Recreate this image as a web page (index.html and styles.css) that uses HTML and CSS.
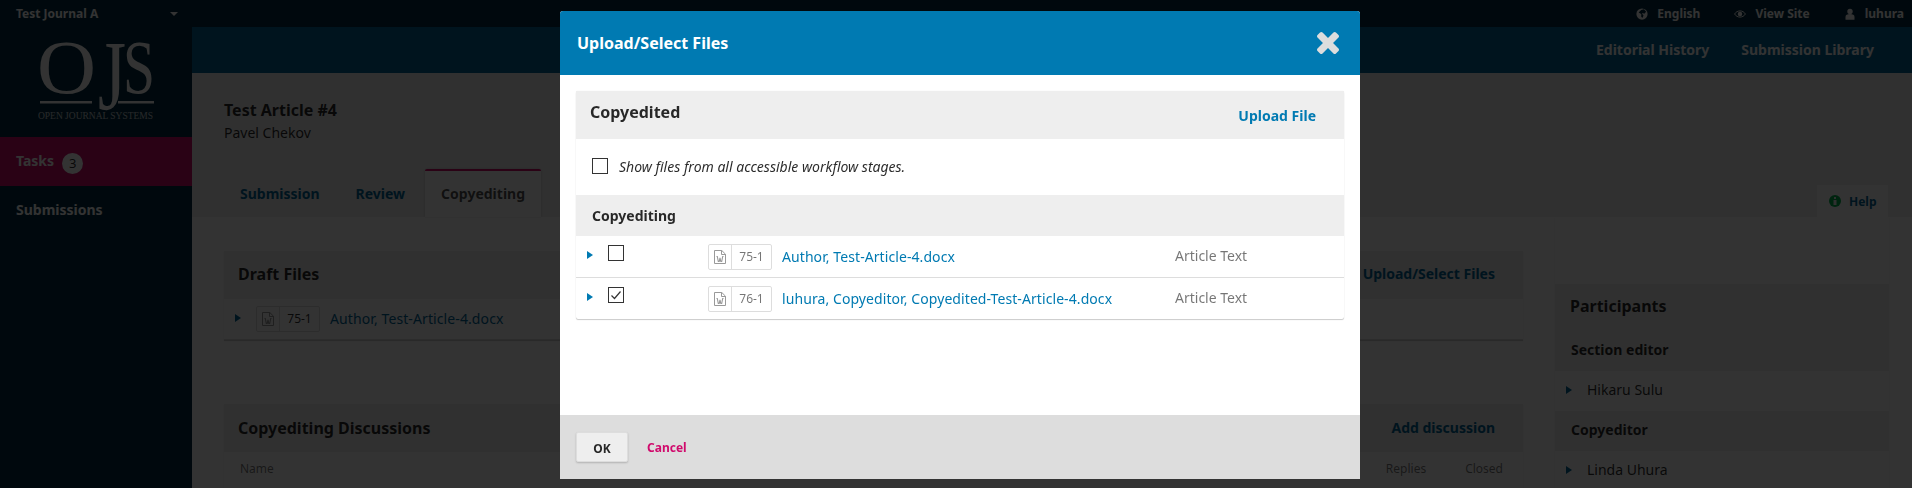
FILE: index.html
```html
<!DOCTYPE html>
<html lang="en">
<head>
<meta charset="utf-8">
<title>Upload/Select Files</title>
<link rel="stylesheet" href="styles.css">
</head>
<body>
<svg class="defs" width="0" height="0" aria-hidden="true">
  <symbol id="i-word" viewBox="0 0 12 14">
    <path d="M.5.5h7.300l3.700 3.700v9.300H.5z" fill="#fff" stroke="currentColor"/>
    <path d="M7.500.5v4h4" fill="none" stroke="currentColor"/>
    <path d="M2.500 6.500h.8l1 5h.9l.8-3.600.8 3.600h.9l1-5h.8" fill="none" stroke="currentColor" stroke-width="1.100"/>
  </symbol>
  <symbol id="i-caret" viewBox="0 0 6 8"><path d="M0 0l6 4-6 4z" fill="currentColor"/></symbol>
</svg>

<div class="page">
  <header class="topbar">
    <div class="journal"><span>Test Journal A</span><i class="caret-down"></i></div>
    <nav class="usernav">
      <a class="usernav-item">
        <svg class="uicon" viewBox="0 0 16 16"><circle cx="8" cy="8" r="7.500" fill="currentColor"/><path d="M7 2.500l3.500-1 3 3.500-2.500 2.500-2-1-1 1 2 2-1 3.500-2-1V8L3.500 6z" fill="#002c40"/></svg>
        English</a>
      <a class="usernav-item">
        <svg class="uicon" viewBox="0 0 16 16"><path d="M.8 8c3.200-5.500 11.200-5.500 14.400 0-3.200 5.500-11.200 5.500-14.400 0z" fill="none" stroke="currentColor" stroke-width="1.300"/><circle cx="8" cy="8" r="3" fill="currentColor"/></svg>
        View Site</a>
      <a class="usernav-item">
        <svg class="uicon" viewBox="0 0 16 16"><circle cx="8" cy="4.500" r="3.600" fill="currentColor"/><path d="M2 15.500v-3.500c0-3 2.200-4 6-4s6 1 6 4v3.500z" fill="currentColor"/></svg>
        luhura</a>
    </nav>
  </header>

  <div class="shell">
    <aside class="sidebar">
      <svg class="logo" viewBox="0 0 116 76" role="img" aria-label="OJS">
        <text class="logo-letter" x="-1" y="49.500" font-size="76" textLength="59" lengthAdjust="spacingAndGlyphs">O</text>
        <text class="logo-letter" x="60" y="66" font-size="100" textLength="28" lengthAdjust="spacingAndGlyphs">J</text>
        <text class="logo-letter" x="85" y="49.500" font-size="76" textLength="32" lengthAdjust="spacingAndGlyphs">S</text>
        <rect x="2" y="58" width="52" height="2.500"/>
        <rect x="80" y="58" width="36" height="2.500"/>
        <text class="logo-small" x="0" y="75.500" font-size="10" textLength="115" lengthAdjust="spacingAndGlyphs">OPEN JOURNAL SYSTEMS</text>
      </svg>
      <a class="side-item side-active">Tasks <span class="badge">3</span></a>
      <a class="side-item">Submissions</a>
    </aside>

    <main class="main">
      <div class="appbar">
        <a>Editorial History</a>
        <a>Submission Library</a>
      </div>
      <section class="head">
        <h1>Test Article #4</h1>
        <p>Pavel Chekov</p>
        <div class="tabs">
          <a class="tab">Submission</a>
          <a class="tab">Review</a>
          <a class="tab tab-current">Copyediting</a>
          <a class="help">
            <svg class="help-icon" viewBox="0 0 12 12"><circle cx="6" cy="6" r="6" fill="#00b24e"/><rect x="5" y="2" width="2" height="2" fill="#eee"/><rect x="4.500" y="5" width="3" height="5" fill="#eee"/></svg>
            <span>Help</span></a>
        </div>
      </section>
      <section class="content">
        <div class="col-left">
          <div class="bg-panel">
            <div class="bg-head"><h2>Draft Files</h2><a>Upload/Select Files</a></div>
            <div class="bg-row">
              <svg class="tri"><use href="#i-caret"/></svg>
              <span class="filetag filetag-dim"><span class="filetag-icon"><svg class="word"><use href="#i-word"/></svg></span><span class="filetag-num">75-1</span></span>
              <a class="link">Author, Test-Article-4.docx</a>
            </div>
          </div>
          <div class="bg-panel bg-panel-next">
            <div class="bg-head"><h2>Copyediting Discussions</h2><a>Add discussion</a></div>
            <div class="bg-cols"><span class="col-name">Name</span><span class="col-replies">Replies</span><span class="col-closed">Closed</span></div>
          </div>
        </div>
        <div class="col-right">
          <div class="part-head">
            <h2>Participants</h2>
            <h3>Section editor</h3>
          </div>
          <div class="part-row"><svg class="tri"><use href="#i-caret"/></svg>Hikaru Sulu</div>
          <h3 class="part-sub">Copyeditor</h3>
          <div class="part-row"><svg class="tri"><use href="#i-caret"/></svg>Linda Uhura</div>
        </div>
      </section>
    </main>
  </div>
</div>

<div class="overlay"></div>

<div class="modal" role="dialog">
  <div class="modal-head">
    <h2>Upload/Select Files</h2>
    <svg class="close" viewBox="110 366 1188 1188"><path d="M1298 1322q0 40-28 68l-136 136q-28 28-68 28t-68-28l-294-294-294 294q-28 28-68 28t-68-28l-136-136q-28-28-28-68t28-68l294-294-294-294q-28-28-28-68t28-68l136-136q28-28 68-28t68 28l294 294 294-294q28-28 68-28t68 28l136 136q28 28 28 68t-28 68l-294 294 294 294q28 28 28 68z" fill="#ddd"/></svg>
  </div>
  <div class="modal-body">
    <div class="panel">
      <div class="panel-head">
        <h3>Copyedited</h3>
        <a class="upload">Upload File</a>
      </div>
      <label class="show-all"><span class="check"></span><em>Show files from all accessible workflow stages.</em></label>
      <div class="stage">Copyediting</div>
      <div class="file-row">
        <svg class="tri tri-blue"><use href="#i-caret"/></svg>
        <span class="check check-row"></span>
        <span class="filetag"><span class="filetag-icon"><svg class="word"><use href="#i-word"/></svg></span><span class="filetag-num">75-1</span></span>
        <a class="file-name">Author, Test-Article-4.docx</a>
        <span class="file-type">Article Text</span>
      </div>
      <div class="file-row">
        <svg class="tri tri-blue"><use href="#i-caret"/></svg>
        <span class="check check-row"><svg viewBox="0 0 14 14"><path d="M2.500 7.500l3 3 6-7" fill="none" stroke="#333" stroke-width="1.200"/></svg></span>
        <span class="filetag"><span class="filetag-icon"><svg class="word"><use href="#i-word"/></svg></span><span class="filetag-num">76-1</span></span>
        <a class="file-name">luhura, Copyeditor, Copyedited-Test-Article-4.docx</a>
        <span class="file-type">Article Text</span>
      </div>
    </div>
  </div>
  <div class="modal-foot">
    <button class="ok">OK</button>
    <a class="cancel">Cancel</a>
  </div>
</div>
</body>
</html>
```
FILE: styles.css
```css
* { box-sizing: border-box; }
html, body { margin: 0; height: 488px; overflow: hidden; }
body { font-family: "Noto Sans", sans-serif; font-size: 14px; line-height: 20px; color: rgba(0,0,0,.84); background: #fff; }
h1, h2, h3, p { margin: 0; }
.defs { position: absolute; }
a { color: #006798; }

.page { height: 488px; overflow: hidden; }
.topbar { height: 27px; background: #002c40; display: flex; justify-content: space-between; align-items: center; color: #fff; font-size: 12px; font-weight: 700; }
.journal { width: 178px; padding-left: 16px; display: flex; justify-content: space-between; align-items: center; }
.caret-down { width: 0; height: 0; border: 4.500px solid transparent; border-top-color: #fff; border-bottom: 0; }
.usernav { display: flex; gap: 34px; padding-right: 8px; }
.usernav-item { color: #fff; display: flex; align-items: center; gap: 9px; }
.uicon { width: 12px; height: 12px; }

.shell { display: flex; height: 461px; }
.sidebar { width: 192px; background: #002c40; flex: none; display: flex; flex-direction: column; }
.logo { width: 116px; height: 76px; margin: 16px 0 18px 38px; fill: #fff; overflow: visible; }
.logo-letter { font-family: "Liberation Serif", serif; }
.logo-small { font-family: "Liberation Serif", serif; opacity: .75; }
.side-item { height: 49px; padding: 0 0 2px 16px; display: flex; align-items: center; gap: 8px; color: #fff; font-weight: 700; font-size: 14px; }
.side-active { background: #d00a6c; }
.badge { width: 21px; height: 21px; border-radius: 50%; background: #fff; color: rgba(0,0,0,.84); font-weight: 400; font-size: 13px; display: flex; align-items: center; justify-content: center; margin-top: 5px; }

.main { flex: 1; min-width: 0; }
.appbar { height: 46px; background: #006798; display: flex; justify-content: flex-end; align-items: center; gap: 32px; padding-right: 38px; }
.appbar a { color: #fff; font-weight: 700; font-size: 14px; }

.head { height: 144px; background: #eee; padding: 27px 0 0 32px; display: flex; flex-direction: column; }
.head h1 { font-size: 16px; font-weight: 700; line-height: 20px; }
.head p { font-size: 14px; margin-top: 3px; }
.tabs { margin-top: auto; display: flex; gap: 4px; align-items: flex-end; height: 48px; padding-right: 24px; }
.tab { height: 46px; display: flex; align-items: center; padding: 0 16px; font-weight: 700; font-size: 14px; }
.tab-current { height: 48px; background: #fff; border-top: 2px solid #d00a6c; border-radius: 2px 2px 0 0; box-shadow: 0 0 2px rgba(0,0,0,.2); color: rgba(0,0,0,.7); }
.help { margin-left: auto; height: 32px; width: 71px; padding-left: 12px; background: #fff; display: flex; align-items: center; gap: 8px; font-size: 12px; font-weight: 700; }
.help span { margin-top: 2px; }
.help-icon { width: 12px; height: 12px; }

.content { background: #fff; display: flex; gap: 32px; padding: 0 23px 0 32px; height: 271px; }
.col-left { width: 1299px; padding-top: 34px; }
.col-right { width: 334px; padding-top: 67px; box-shadow: 0 1px 1px rgba(0,0,0,.1); }
.bg-panel { box-shadow: 0 1px 1px rgba(0,0,0,.2); }
.bg-panel-next { margin-top: 64px; }
.bg-head { height: 48px; padding: 0 28px 2px 14px; display: flex; justify-content: space-between; align-items: center; background: #eee; }
.bg-panel-next .bg-head { padding-bottom: 0; }
.bg-head h2 { font-size: 16px; font-weight: 700; }
.bg-head a { font-weight: 700; font-size: 14px; }
.bg-row { height: 41px; padding-left: 11px; display: flex; align-items: center; border-bottom: 1px solid #ddd; }
.bg-row .tri { margin: -3px 15px 0 0; }
.bg-row .filetag { margin-right: 10px; }
.link { font-size: 14px; letter-spacing: .1px; }
.bg-cols { height: 36px; padding-bottom: 2px; display: flex; align-items: center; font-size: 12px; color: rgba(0,0,0,.54); padding-left: 16px; }
.col-name { flex: 1; }
.col-replies { margin-right: 39px; }
.col-closed { margin-right: 20px; }

.part-head { height: 87px; background: #eee; padding: 12px 0 0 15px; }
.part-head h2 { font-size: 16px; font-weight: 700; }
.part-head h3, .part-sub { font-size: 14px; font-weight: 700; }
.part-head h3 { margin: 24px 0 0 1px; }
.part-sub { height: 40px; background: #eee; display: flex; align-items: center; padding: 0 0 2px 16px; }
.part-row { height: 40px; display: flex; align-items: center; padding: 0 0 2px 11px; font-size: 14px; }
.part-row .tri { margin-right: 15px; }

.tri { width: 6px; height: 8px; color: #006798; flex: none; }
.filetag { width: 64px; height: 26px; border: 1px solid #ddd; border-radius: 2px; display: inline-flex; font-size: 12px; color: rgba(0,0,0,.54); background: #fff; flex: none; }
.filetag-dim { color: rgba(0,0,0,.84); }
.filetag-icon { width: 23px; border-right: 1px solid #ddd; display: flex; align-items: center; justify-content: center; color: #999; }
.filetag-num { flex: 1; text-align: center; line-height: 24px; }
.word { width: 12px; height: 14px; }

.overlay { position: fixed; inset: 0; background: rgba(0,0,0,.8); }
.modal { position: absolute; left: 560px; top: 11px; width: 800px; height: 468px; background: #fff; border-radius: 3px 3px 0 0; display: flex; flex-direction: column; overflow: hidden; }
.modal-head { height: 64px; background: #007ab2; display: flex; align-items: center; justify-content: space-between; padding: 0 21px 0 17px; flex: none; }
.modal-head h2 { color: #fff; font-size: 16px; font-weight: 700; }
.close { width: 22px; height: 22px; }
.modal-body { flex: 1; padding: 16px 16px 0; }
.panel { box-shadow: 0 1px 1px rgba(0,0,0,.2), 0 0 1px rgba(0,0,0,.15); border-radius: 2px; }
.panel-head { height: 48px; background: #eee; display: flex; justify-content: space-between; padding: 0 28px 0 14px; }
.panel-head h3 { font-size: 16px; font-weight: 700; line-height: 20px; margin-top: 11px; }
.upload { color: #007ab2; font-size: 14px; font-weight: 700; margin-top: 15px; }
.show-all { height: 56px; display: flex; align-items: center; padding-left: 16px; gap: 11px; }
.show-all em { font-size: 14px; }
.check { width: 16px; height: 16px; border: 1px solid #333; background: #fff; display: block; margin-top: -2px; flex: none; }
.check svg { display: block; width: 14px; height: 14px; }
.stage { height: 41px; background: #eee; padding-left: 16px; display: flex; align-items: center; font-weight: 700; font-size: 14px; }
.file-row { height: 42px; border-bottom: 1px solid #ddd; display: flex; align-items: center; padding-left: 11px; }
.file-row:last-child { height: 41px; border-bottom: 0; }
.tri-blue { color: #007ab2; margin-top: -3px; margin-right: 15px; }
.check-row { margin-top: -7px; margin-right: 84px; }
.file-row .filetag { margin-right: 10px; }
.file-name { color: #007ab2; font-size: 14px; letter-spacing: .08px; width: 393px; flex: none; }
.file-type { font-size: 14px; color: rgba(0,0,0,.54); margin-top: -2px; }
.modal-foot { height: 64px; background: #ddd; display: flex; align-items: center; padding: 2px 16px 0; gap: 19px; flex: none; }
.ok { width: 52px; height: 30px; margin-top: -2px; background: #eee; border: 1px solid #ddd; border-radius: 2px; box-shadow: 0 1px 2px rgba(0,0,0,.2); font: 700 12px "Noto Sans", sans-serif; color: rgba(0,0,0,.84); padding: 2px 0 0; }
.cancel { color: #d00a6c; font-size: 12px; font-weight: 700; }
```
